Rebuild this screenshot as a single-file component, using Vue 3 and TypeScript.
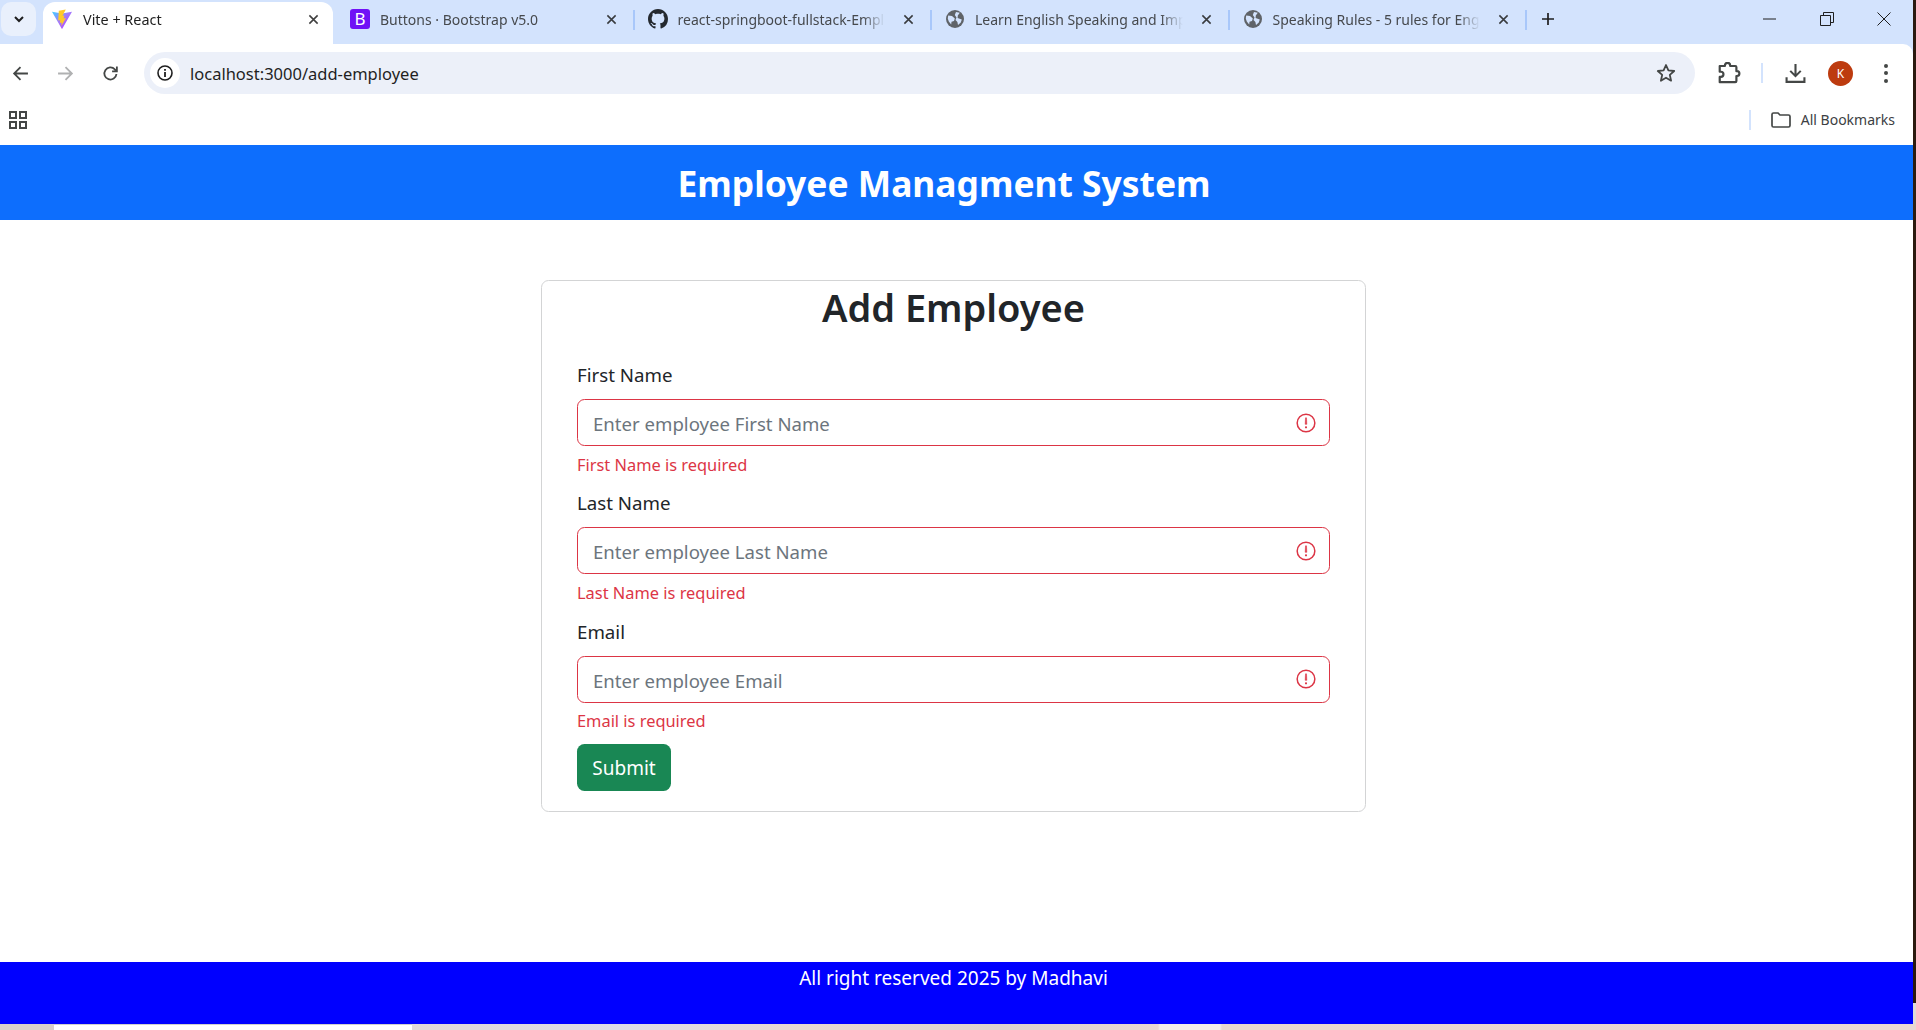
<script setup lang="ts">
import { ref } from 'vue'

interface Tab {
  title: string
  icon: 'vite' | 'bootstrap' | 'github' | 'globe'
  active?: boolean
}

const tabs: Tab[] = [
  { title: 'Vite + React', icon: 'vite', active: true },
  { title: 'Buttons · Bootstrap v5.0', icon: 'bootstrap' },
  { title: 'react-springboot-fullstack-Employee', icon: 'github' },
  { title: 'Learn English Speaking and Improve', icon: 'globe' },
  { title: 'Speaking Rules - 5 rules for English', icon: 'globe' },
]

const fields = [
  { label: 'First Name', placeholder: 'Enter employee First Name', error: 'First Name is required' },
  { label: 'Last Name', placeholder: 'Enter employee Last Name', error: 'Last Name is required' },
  { label: 'Email', placeholder: 'Enter employee Email', error: 'Email is required' },
]

const values = ref<string[]>(['', '', ''])
</script>

<template>
  <div class="page">
    <div class="tabstrip">
      <button class="tab-search">
        <svg width="12" height="12" viewBox="0 0 12 12"><path d="M2 4l4 4 4-4" fill="none" stroke="#1f1f1f" stroke-width="2" /></svg>
      </button>
      <div v-for="tab in tabs" :key="tab.title" class="tab" :class="{ active: tab.active }">
        <svg v-if="tab.icon === 'vite'" class="favicon" viewBox="0 0 20 20">
          <defs>
            <linearGradient id="vite-body" x1="0" y1="0" x2="1" y2="1">
              <stop offset="0" stop-color="#41d1ff" />
              <stop offset="0.45" stop-color="#a07cfc" />
              <stop offset="1" stop-color="#bd34fe" />
            </linearGradient>
          </defs>
          <path d="M0 2.800 L10 4.600 L20 2.800 L10.400 19.600 Q10 20.200 9.600 19.600Z" fill="url(#vite-body)" />
          <path d="M13.800 0.400 L6.800 1.800 L6.200 11.500 L8.300 11 L7.800 14 L9.700 13.400 L9.300 17 L14 9 L11.600 9.500 L12.400 6.500 L10.500 6.800Z" fill="#ffc928" />
        </svg>
        <svg v-else-if="tab.icon === 'bootstrap'" class="favicon" viewBox="0 0 20 20">
          <rect width="20" height="20" rx="3" fill="#7011f6" />
          <text x="10" y="16" text-anchor="middle" class="b-letter">B</text>
        </svg>
        <svg v-else-if="tab.icon === 'github'" class="favicon" viewBox="0 0 16 16">
          <path fill="#24292f" d="M8 0C3.58 0 0 3.58 0 8c0 3.54 2.29 6.53 5.47 7.59.4.07.55-.17.55-.38 0-.19-.01-.82-.01-1.49-2.01.37-2.53-.49-2.69-.94-.09-.23-.48-.94-.82-1.13-.28-.15-.68-.52-.01-.53.63-.01 1.08.58 1.23.82.72 1.21 1.87.87 2.33.66.07-.52.28-.87.51-1.07-1.78-.2-3.64-.89-3.64-3.95 0-.87.31-1.59.82-2.15-.08-.2-.36-1.02.08-2.12 0 0 .67-.21 2.2.82.64-.18 1.32-.27 2-.27s1.36.09 2 .27c1.53-1.04 2.2-.82 2.2-.82.44 1.1.16 1.92.08 2.12.51.56.82 1.27.82 2.15 0 3.07-1.87 3.75-3.65 3.95.29.25.54.73.54 1.48 0 1.07-.01 1.93-.01 2.2 0 .21.15.46.55.38A8.010 8.010 0 0 0 16 8c0-4.420-3.580-8-8-8z" />
        </svg>
        <svg v-else class="favicon globe" viewBox="0 0 20 20">
          <circle cx="10" cy="10" r="9" fill="#5f6368" />
          <path d="M3.200 6.500 L7 7 L9.800 9.500 L9 12 L6.500 12.800 L6.200 15.500 L3.800 12.500 L2.800 9.500Z" fill="#d3e3fd" />
          <path d="M11 3 L14.800 3.800 L12.800 6.500 L12.600 9 L16.800 10.500 L15.800 13.500 L13 16 L12.400 13 L10.500 11 L11.500 8.500 L9.800 6 Z" fill="#d3e3fd" />
        </svg>
        <span class="tab-title">{{ tab.title }}</span>
        <svg class="tab-close" viewBox="0 0 12 12"><path d="M1.500 1.500l9 9M10.500 1.500l-9 9" stroke="#1f1f1f" stroke-width="1.700" /></svg>
      </div>
      <svg class="new-tab" viewBox="0 0 14 14"><path d="M7 1v12M1 7h12" stroke="#1f1f1f" stroke-width="1.700" /></svg>
      <div class="window-controls">
        <svg viewBox="0 0 14 14"><path d="M0 7h13" stroke="#1f1f1f" /></svg>
        <svg viewBox="0 0 14 14"><path d="M.5 3.500h10v10H.5zM3.500 3.500v-3h10v10h-3" fill="none" stroke="#1f1f1f" /></svg>
        <svg viewBox="0 0 14 14"><path d="M.5.5l13 13M13.500.5l-13 13" stroke="#1f1f1f" /></svg>
      </div>
    </div>

    <div class="toolbar">
      <svg class="tool" viewBox="0 0 16 16"><path d="M15 8H2M8 2L2 8l6 6" fill="none" stroke="#444746" stroke-width="1.700" /></svg>
      <svg class="tool" viewBox="0 0 16 16"><path d="M1 8h13M8 2l6 6-6 6" fill="none" stroke="#b0b1b2" stroke-width="1.700" /></svg>
      <svg class="tool" viewBox="0 0 16 16"><path d="M13.600 8.500a5.700 5.700 0 1 1-1.500-4.400L14 6M14 1.500V6H9.500" fill="none" stroke="#444746" stroke-width="1.700" /></svg>
      <div class="omnibox">
        <span class="site-info">
          <svg width="16" height="16" viewBox="0 0 16 16"><circle cx="8" cy="8" r="7" fill="none" stroke="#1f1f1f" stroke-width="1.600" /><path d="M8 7v5M8 4v1.800" stroke="#1f1f1f" stroke-width="1.800" /></svg>
        </span>
        <span class="url">localhost:3000/add-employee</span>
        <svg class="star" viewBox="0 0 20 20"><path d="M10 2l2.400 5.400 5.800.6-4.400 3.900 1.300 5.800L10 14.700l-5.100 3 1.300-5.800L1.800 8l5.800-.6z" fill="none" stroke="#444746" stroke-width="1.800" stroke-linejoin="round" /></svg>
      </div>
      <svg class="ext" viewBox="0 0 20 20"><path d="M1.500 3.500h4.500v-.5a2.300 2.300 0 0 1 4.600 0v.5h4.400a1 1 0 0 1 1 1v3.500h.5a2 2 0 0 1 0 4.200h-.5v4.300a1 1 0 0 1-1 1H1.500v-4.500h1a2.200 2.200 0 0 0 0-4.500h-1z" fill="none" stroke="#444746" stroke-width="1.900" stroke-linejoin="round" /></svg>
      <span class="sep"></span>
      <svg class="download" viewBox="0 0 20 20"><path d="M10 1v11M5 7.500l5 5 5-5M1.500 13.500v4.500h17v-4.500" fill="none" stroke="#444746" stroke-width="2" /></svg>
      <span class="avatar">K</span>
      <span class="menu"><i></i><i></i><i></i></span>
    </div>

    <div class="bookmarks">
      <svg class="apps" viewBox="0 0 18 18"><path d="M1 1h6v6H1zM11 1h6v6h-6zM1 11h6v6H1zM11 11h6v6h-6z" fill="none" stroke="#444746" stroke-width="2" /></svg>
      <span class="sep tall"></span>
      <svg class="folder" viewBox="0 0 20 16"><path d="M1 2.500a1.500 1.500 0 0 1 1.500-1.500h4.500l2 2h8.500a1.500 1.500 0 0 1 1.500 1.500v9a1.500 1.500 0 0 1-1.500 1.500h-15a1.500 1.500 0 0 1-1.500-1.500z" fill="none" stroke="#444746" stroke-width="1.700" /></svg>
      <span class="all-bm">All Bookmarks</span>
    </div>

    <header class="app-header">
      <h1>Employee Managment System</h1>
    </header>

    <main class="content">
      <div class="card">
        <h2>Add Employee</h2>
        <form class="card-body" @submit.prevent>
          <div v-for="(field, i) in fields" :key="field.label" class="form-group">
            <label>{{ field.label }}</label>
            <div class="input-wrap">
              <input v-model="values[i]" type="text" :placeholder="field.placeholder" />
              <svg class="invalid-icon" viewBox="0 0 12 12">
                <circle cx="6" cy="6" r="5.300" fill="none" stroke="#dc3545" stroke-width=".9" />
                <path d="M5.700 2.900h.6l.2 3.900h-1z" fill="#dc3545" stroke="#dc3545" stroke-width=".3" />
                <circle cx="6" cy="8.600" r=".65" fill="#dc3545" />
              </svg>
            </div>
            <div class="feedback">{{ field.error }}</div>
          </div>
          <button class="submit" type="submit">Submit</button>
        </form>
      </div>
    </main>

    <footer class="app-footer">All right reserved 2025 by Madhavi</footer>
    <div class="taskbar-edge"><span></span></div>
    <div class="right-edge"></div>
  </div>
</template>

<style>
html, body {
  margin: 0;
  height: 100%;
  overflow: hidden;
  background: #fff;
}
</style>

<style scoped>
.page {
  position: relative;
  display: flex;
  flex-direction: column;
  width: 1916px;
  height: 1030px;
  overflow: hidden;
  font-family: "Noto Sans", "Open Sans", "Liberation Sans", sans-serif;
  color: #212529;
}
.tabstrip {
  display: flex;
  align-items: flex-start;
  height: 54px;
  margin-bottom: -10px;
  padding-left: 1px;
  box-sizing: border-box;
  background: #d3e3fd;
  flex: none;
}
.tab-search {
  display: flex;
  align-items: center;
  justify-content: center;
  width: 35px;
  height: 34px;
  margin-top: 2px;
  margin-right: 7px;
  padding: 0;
  border: 0;
  border-radius: 10px;
  background: #e9f0fc;
}
.tab {
  position: relative;
  display: flex;
  align-items: center;
  box-sizing: border-box;
  width: 297.500px;
  height: 42px;
  margin-top: 2px;
  padding: 0 22px 8px 9px;
  font-size: 14px;
  color: #46494d;
  flex: none;
}
.tab:not(.active)::after {
  content: "";
  position: absolute;
  right: 4px;
  top: 8px;
  width: 2px;
  height: 20px;
  background: #a8c7fa;
}
.tab.active {
  width: 290px;
  margin-right: 8px;
  padding: 0 14px 8px 9px;
  border-radius: 12px 12px 0 0;
  background: #fff;
  color: #1f1f1f;
}
.favicon {
  width: 20px;
  height: 20px;
  flex: none;
}
.b-letter {
  fill: #fff;
  font-size: 17px;
  font-weight: 400;
  font-family: "Noto Sans", sans-serif;
}
.tab-title {
  flex: 1;
  min-width: 0;
  margin: 0 18px 0 10px;
  overflow: hidden;
  white-space: nowrap;
  mask-image: linear-gradient(to right, #000 calc(100% - 22px), transparent 100%);
}
.tab.active .tab-title {
  margin-left: 11px;
  font-size: 14.400px;
}
.tab-close {
  width: 11px;
  height: 11px;
  flex: none;
  opacity: 0.85;
}
.new-tab {
  width: 14px;
  height: 14px;
  margin: 12px 0 0 10px;
  flex: none;
}
.window-controls {
  display: flex;
  gap: 43px;
  margin-left: auto;
  margin-right: 25px;
  margin-top: 12px;
}
.window-controls svg {
  width: 14px;
  height: 14px;
}
.toolbar {
  position: relative;
  display: flex;
  align-items: center;
  width: 1913px;
  height: 50px;
  padding: 8px 12px 0 12px;
  box-sizing: border-box;
  border-top-right-radius: 10px;
  background: #fff;
  flex: none;
}
.tool {
  width: 17px;
  height: 17px;
  margin-right: 28px;
  flex: none;
}
.tool:nth-child(3) {
  margin-right: 27px;
}
.omnibox {
  display: flex;
  align-items: center;
  width: 1551px;
  height: 42px;
  margin-left: -2px;
  border-radius: 21px;
  background: #ecf0f9;
  flex: none;
}
.site-info {
  display: flex;
  align-items: center;
  justify-content: center;
  width: 30px;
  height: 30px;
  margin-left: 6px;
  border-radius: 50%;
  background: #fff;
}
.url {
  margin-left: 10px;
  font-size: 16.500px;
  color: #1f1f1f;
}
.star {
  width: 20px;
  height: 20px;
  margin-left: auto;
  margin-right: 19px;
}
.ext {
  width: 23px;
  height: 23px;
  margin-left: 23px;
  flex: none;
}
.sep {
  width: 2px;
  height: 20px;
  margin-left: 20px;
  background: #d3e3fd;
  flex: none;
}
.download {
  width: 21px;
  height: 21px;
  margin-left: 22px;
  flex: none;
}
.avatar {
  display: flex;
  align-items: center;
  justify-content: center;
  width: 25px;
  height: 25px;
  margin-left: 22px;
  border-radius: 50%;
  background: #bd3b0f;
  color: #fff;
  font-size: 12px;
  flex: none;
}
.menu {
  display: flex;
  flex-direction: column;
  gap: 3.500px;
  margin-left: 31px;
  flex: none;
}
.menu i {
  width: 4px;
  height: 4px;
  border-radius: 50%;
  background: #444746;
}
.bookmarks {
  display: flex;
  align-items: center;
  height: 51px;
  padding: 0 21px 0 9px;
  box-sizing: border-box;
  flex: none;
}
.apps {
  width: 18px;
  height: 18px;
}
.sep.tall {
  height: 20px;
  margin-left: auto;
}
.folder {
  width: 20px;
  height: 16px;
  margin-left: 20px;
}
.all-bm {
  margin-left: 10px;
  font-size: 14px;
  color: #3c4043;
}
.app-header {
  display: flex;
  align-items: center;
  justify-content: center;
  box-sizing: border-box;
  width: 1913px;
  height: 75px;
  padding: 2px 25px 0 0;
  background: #0d6efd;
  color: #fff;
  flex: none;
}
.app-header h1 {
  margin: 0;
  font-size: 35.400px;
  font-weight: 700;
  line-height: 1.2;
}
.content {
  flex: 1;
  width: 1907px;
  padding-top: 60px;
  box-sizing: border-box;
}
.card {
  box-sizing: border-box;
  width: 825px;
  margin: 0 auto;
  border: 1px solid #d3d4d5;
  border-radius: 7.500px;
  background: #fff;
}
.card h2 {
  margin: 0 0 10px;
  padding-top: 2px;
  height: 46px;
  font-size: 38px;
  font-weight: 600;
  line-height: 48px;
  text-align: center;
}
.card-body {
  padding: 20px 35px 20px 35px;
}
.form-group {
  margin-bottom: 10px;
}
label {
  display: block;
  margin-bottom: 10px;
  padding-top: 1px;
  height: 29px;
  font-size: 18.700px;
  line-height: 30px;
}
.input-wrap {
  position: relative;
}
input {
  display: block;
  box-sizing: border-box;
  width: 100%;
  height: 47px;
  padding: 8px 47px 6px 15px;
  border: 1px solid #dc3545;
  border-radius: 7.500px;
  background: #fff;
  font: inherit;
  font-size: 18.600px;
  color: #212529;
  outline: none;
}
input::placeholder {
  color: #6c757d;
  opacity: 1;
}
.invalid-icon {
  position: absolute;
  top: 13.500px;
  right: 14px;
  width: 20px;
  height: 20px;
}
.feedback {
  margin-top: 5.500px;
  margin-bottom: -0.500px;
  font-size: 16.400px;
  line-height: 26.250px;
  color: #dc3545;
}
.submit {
  display: block;
  box-sizing: border-box;
  width: 94px;
  height: 47px;
  padding: 1px 0 0;
  border: 0;
  border-radius: 7.500px;
  background: #198754;
  color: #fff;
  font: inherit;
  font-size: 19px;
}
.app-footer {
  box-sizing: border-box;
  width: 1913px;
  height: 62px;
  padding: 1px 6px 0 0;
  background: #0000ff;
  color: #fff;
  font-size: 19px;
  line-height: 30px;
  text-align: center;
  flex: none;
}
.taskbar-edge {
  height: 6px;
  background: linear-gradient(to right, #d9d0cb 0, #d9d0cb 54px, #e0d8d8 412px, #dcdce8 620px, #e8d9d2 800px, #dcd3cf 1000px, #e8d8d2 1158px, #f3eeea 1160px, #f3eeea 1220px, #e8d8ce 1222px, #e9d7d4 1916px);
  flex: none;
}
.taskbar-edge span {
  display: block;
  width: 358px;
  height: 5px;
  margin-left: 54px;
  border-top: 1px solid #cfcfcf;
  background: #fff;
}
.right-edge {
  position: absolute;
  top: 0;
  right: 0;
  width: 3px;
  height: 1024px;
  background: linear-gradient(to bottom, #2b1a10 1003px, #e0dbd8 1003px);
}
</style>
